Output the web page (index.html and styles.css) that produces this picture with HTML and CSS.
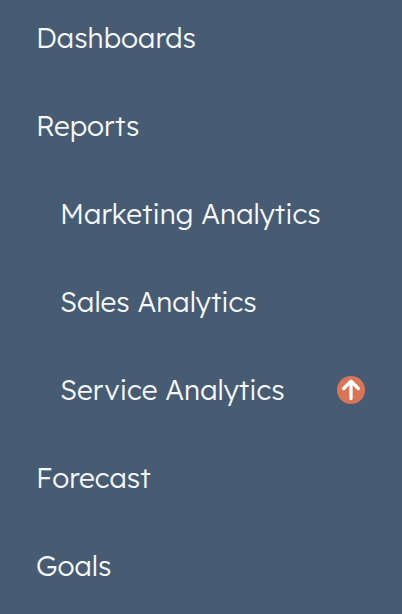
FILE: index.html
```html
<!DOCTYPE html>
<html lang="en">
<head>
<meta charset="utf-8">
<meta name="viewport" content="width=device-width, initial-scale=1">
<title>Reports menu</title>
<link rel="stylesheet" href="styles.css">
</head>
<body>
<nav class="menu" aria-label="Reports">
  <ul class="menu-list">
    <li><a class="menu-link" href="#">Dashboards</a></li>
    <li><a class="menu-link" href="#">Reports</a>
      <ul class="menu-list submenu">
        <li><a class="menu-link" href="#">Marketing Analytics</a></li>
        <li><a class="menu-link" href="#">Sales Analytics</a></li>
        <li><a class="menu-link" href="#">Service Analytics
          <svg class="upgrade" viewBox="0 0 28 28" aria-hidden="true">
            <circle cx="14" cy="14" r="14" fill="#d97557"/>
            <path d="M14 22.5V5.5M6.7 12.5l7.3-7.3 7.3 7.3" fill="none" stroke="#fff" stroke-width="3.3" stroke-linecap="round" stroke-linejoin="round"/>
          </svg></a></li>
      </ul>
    </li>
    <li><a class="menu-link" href="#">Forecast</a></li>
    <li><a class="menu-link" href="#">Goals</a></li>
  </ul>
</nav>
</body>
</html>
```
FILE: styles.css
```css
body {
  margin: 0;
  background: #475b73;
  color: #f5f8fa;
  font-family: Lexend, Lato, sans-serif;
  font-size: 28px;
  font-weight: 300;
  line-height: 32px;
}

.menu-list {
  margin: 0;
  padding: 0;
  list-style: none;
}

.menu {
  padding: 0 37px 0 36px;
  margin-top: -6px;
}

.submenu {
  padding-left: 24px;
}

.menu-link {
  display: flex;
  align-items: center;
  justify-content: space-between;
  height: 88px;
  color: inherit;
  text-decoration: none;
}

.upgrade {
  width: 28px;
  height: 28px;
}
```
